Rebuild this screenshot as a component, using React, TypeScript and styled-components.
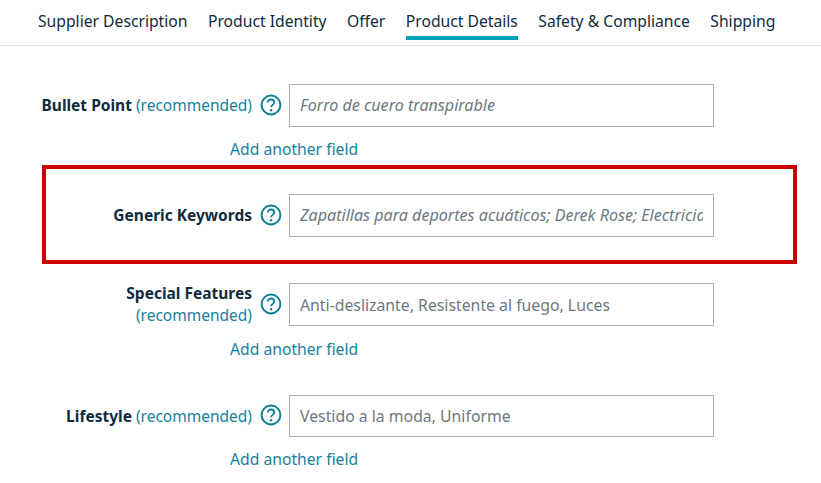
import React from "react";
import styled, { createGlobalStyle } from "styled-components";

const Global = createGlobalStyle`
  html, body { margin: 0; padding: 0; background: #fff; }
  body { font-family: "Noto Sans", "Open Sans", sans-serif; color: #0f2b3d; }
`;

const Page = styled.div`
  width: 821px;
  height: 483px;
  overflow: hidden;
`;

const Tabs = styled.nav`
  display: flex;
  gap: 20.4px;
  height: 45px;
  padding-left: 38px;
  border-bottom: 1px solid #dcdfdf;
`;

const Tab = styled.a<{ $active?: boolean }>`
  height: 40px;
  box-sizing: border-box;
  padding-top: 9px;
  font-size: 15.7px;
  line-height: 24px;
  color: #0f2b3d;
  white-space: nowrap;
  border-bottom: 4px solid ${(p) => (p.$active ? "#00a2b3" : "transparent")};
`;

const Form = styled.form`
  display: flex;
  flex-direction: column;
  padding-top: 38px;
`;

const Row = styled.div<{ $nested?: boolean }>`
  display: grid;
  grid-template-columns: 200px 37px 425px;
  align-items: center;
  margin-left: ${(p) => (p.$nested ? "6px" : "52px")};
`;

const Label = styled.label<{ $flush?: boolean }>`
  text-align: right;
  font-size: 15.5px;
  line-height: 22px;
  margin-block: -2px;
  padding-bottom: ${(p) => (p.$flush ? "0" : "2px")};
  font-weight: 700;
  color: #0f2b3d;
  white-space: nowrap;
  justify-self: end;
`;

const Hint = styled.span`
  font-weight: 400;
  color: #14819c;
`;

const Help = styled.span`
  display: flex;
  justify-content: flex-start;
  padding: 0 0 2px 8px;
  color: #0b7f98;
`;

const Field = styled.div<{ $italic?: boolean; $height?: number }>`
  box-sizing: border-box;
  height: ${(p) => p.$height ?? 43}px;
  padding: 0 10px ${(p) => (p.$italic ? "2px" : "0")};
  display: flex;
  align-items: center;
  border: 1px solid #a6b2b7;
  font-size: ${(p) => (p.$italic ? "16.1px" : "15.8px")};
  font-style: ${(p) => (p.$italic ? "italic" : "normal")};
  color: #6c7880;
  overflow: hidden;
  white-space: nowrap;
`;

const FieldText = styled.span`
  display: block;
  overflow: hidden;
`;

const AddLink = styled.a<{ $gap: number; $top?: number }>`
  display: block;
  margin: ${(p) => p.$top ?? 11}px 0 ${(p) => p.$gap}px 230px;
  font-size: 15.7px;
  line-height: 22px;
  color: #14819c;
`;

const Highlight = styled.section`
  box-sizing: border-box;
  width: 755px;
  height: 99px;
  margin: 0 0 19px 42px;
  padding-top: 25px;
  border: 4px solid #cc0000;
`;

const HelpIcon = () => (
  <svg width="22" height="22" viewBox="0 0 22 22" fill="none" aria-hidden="true">
    <circle cx="11" cy="11" r="9.4" stroke="currentColor" strokeWidth="2" />
    <path
      d="M7.7 8.6c0-1.9 1.4-3.1 3.3-3.1s3.3 1.2 3.3 2.9c0 2.4-3.2 2.5-3.2 4.9"
      stroke="currentColor"
      strokeWidth="1.8"
      fill="none"
    />
    <circle cx="11.1" cy="16.2" r="1.2" fill="currentColor" />
  </svg>
);

export default function App() {
  return (
    <Page>
      <Global />
      <Tabs>
        <Tab>Supplier Description</Tab>
        <Tab>Product Identity</Tab>
        <Tab>Offer</Tab>
        <Tab $active>Product Details</Tab>
        <Tab>Safety &amp; Compliance</Tab>
        <Tab>Shipping</Tab>
      </Tabs>
      <Form>
        <Row>
          <Label>
            Bullet Point <Hint>(recommended)</Hint>
          </Label>
          <Help><HelpIcon /></Help>
          <Field $italic><FieldText>Forro de cuero transpirable</FieldText></Field>
        </Row>
        <AddLink $gap={5}>Add another field</AddLink>
        <Highlight>
          <Row $nested>
            <Label>Generic Keywords</Label>
            <Help><HelpIcon /></Help>
            <Field $italic>
              <FieldText>Zapatillas para deportes acuáticos; Derek Rose; Electricidad</FieldText>
            </Field>
          </Row>
        </Highlight>
        <Row>
          <Label>
            Special Features
            <br />
            <Hint>(recommended)</Hint>
          </Label>
          <Help><HelpIcon /></Help>
          <Field><FieldText>Anti-deslizante, Resistente al fuego, Luces</FieldText></Field>
        </Row>
        <AddLink $top={12} $gap={35}>Add another field</AddLink>
        <Row>
          <Label $flush>
            Lifestyle <Hint>(recommended)</Hint>
          </Label>
          <Help><HelpIcon /></Help>
          <Field $height={42}><FieldText>Vestido a la moda, Uniforme</FieldText></Field>
        </Row>
        <AddLink $gap={0}>Add another field</AddLink>
      </Form>
    </Page>
  );
}
